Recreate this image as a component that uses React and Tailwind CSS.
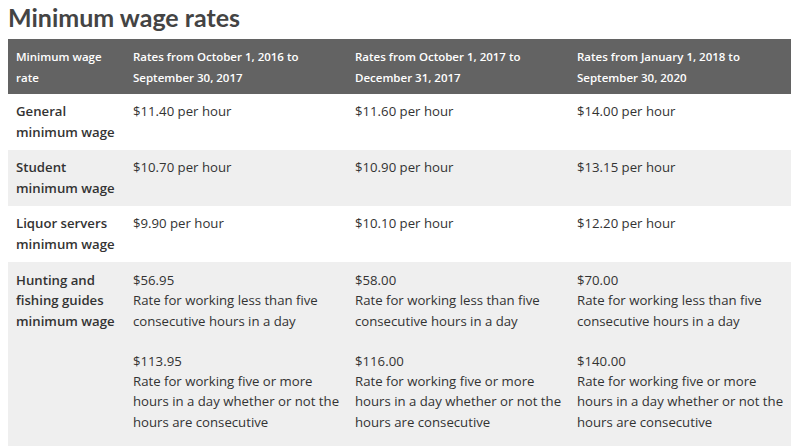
import React from 'react';

const headers = [
  'Minimum wage rate',
  'Rates from October 1, 2016 to September 30, 2017',
  'Rates from October 1, 2017 to December 31, 2017',
  'Rates from January 1, 2018 to September 30, 2020',
];

const rows = [
  { name: 'General minimum wage', values: ['$11.40 per hour', '$11.60 per hour', '$14.00 per hour'] },
  { name: 'Student minimum wage', values: ['$10.70 per hour', '$10.90 per hour', '$13.15 per hour'] },
  { name: 'Liquor servers minimum wage', values: ['$9.90 per hour', '$10.10 per hour', '$12.20 per hour'] },
];

const guides = [
  ['$56.95', '$113.95'],
  ['$58.00', '$116.00'],
  ['$70.00', '$140.00'],
];

const App = () => {
  return (
    <div className="bg-white w-[800px] h-[446px] overflow-hidden text-[#333]" style={{ fontFamily: '"Open Sans", sans-serif' }}>
      <h1 className="pl-2 h-[39px] text-[25px] leading-[34px] font-bold text-[#444]" style={{ fontFamily: 'Lato, sans-serif' }}>
        Minimum wage rates
      </h1>
      <table className="ml-2 w-[783px] border-collapse table-fixed">
        <colgroup>
          <col className="w-[117px]" />
          <col className="w-[222px]" />
          <col className="w-[222px]" />
          <col className="w-[222px]" />
        </colgroup>
        <thead>
          <tr className="bg-[#636363] text-white h-[55px]">
            {headers.map((h, i) => (
              <th key={i} className={`text-left align-top font-semibold text-[11.5px] leading-[21px] pt-[7px] pb-[6px] pl-2 ${i === 0 ? 'pr-2' : 'pr-6'}`}>
                {h}
              </th>
            ))}
          </tr>
        </thead>
        <tbody className="text-[13.2px] leading-[20.5px]">
          {rows.map((row, i) => (
            <tr key={i} className={`h-[56px] ${i % 2 === 1 ? 'bg-[#efefef]' : 'bg-white'}`}>
              <td className="align-top pl-2 pr-1 pt-[7px] font-semibold">{row.name}</td>
              {row.values.map((v, j) => (
                <td key={j} className="align-top pl-2 pt-[7px]">{v}</td>
              ))}
            </tr>
          ))}
          <tr className="bg-[#efefef] leading-[20.3px]">
            <td className="align-top pl-2 pr-1 pt-[8px] pb-[14px] font-semibold">Hunting and fishing guides minimum wage</td>
            {guides.map((g, j) => (
              <td key={j} className="align-top pl-2 pr-1 pt-[8px] pb-[14px]">
                <p>{g[0]}</p>
                <p>Rate for working less than five consecutive hours in a day</p>
                <p className="mt-[20px]">{g[1]}</p>
                <p>Rate for working five or more hours in a day whether or not the hours are consecutive</p>
              </td>
            ))}
          </tr>
        </tbody>
      </table>
    </div>
  );
};

export default App;
